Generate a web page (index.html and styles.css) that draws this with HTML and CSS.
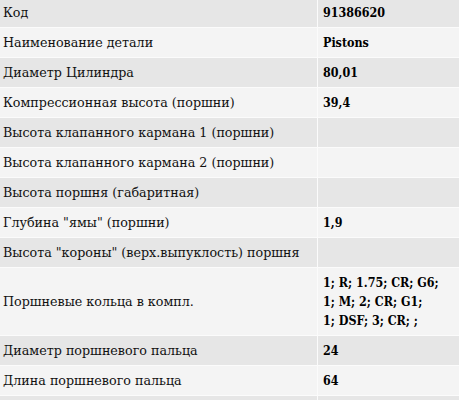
FILE: index.html
```html
<!DOCTYPE html>
<html lang="ru">
<head>
<meta charset="utf-8">
<title>Характеристики</title>
<link rel="stylesheet" href="styles.css">
</head>
<body>
<div class="wrap">
<table class="specs">
<tbody>
<tr class="odd"><td class="name">Код</td><td class="val">91386620</td></tr>
<tr class="even"><td class="name">Наименование детали</td><td class="val">Pistons</td></tr>
<tr class="odd"><td class="name">Диаметр Цилиндра</td><td class="val">80,01</td></tr>
<tr class="even"><td class="name">Компрессионная высота (поршни)</td><td class="val">39,4</td></tr>
<tr class="odd"><td class="name">Высота клапанного кармана 1 (поршни)</td><td class="val"></td></tr>
<tr class="even"><td class="name">Высота клапанного кармана 2 (поршни)</td><td class="val"></td></tr>
<tr class="odd"><td class="name">Высота поршня (габаритная)</td><td class="val"></td></tr>
<tr class="even"><td class="name">Глубина "ямы" (поршни)</td><td class="val">1,9</td></tr>
<tr class="odd"><td class="name">Высота "короны" (верх.выпуклость) поршня</td><td class="val"></td></tr>
<tr class="even"><td class="name">Поршневые кольца в компл.</td><td class="val">1; R; 1.75; CR; G6;<br>1; M; 2; CR; G1;<br>1; DSF; 3; CR; ;</td></tr>
<tr class="odd"><td class="name">Диаметр поршневого пальца</td><td class="val">24</td></tr>
<tr class="even"><td class="name">Длина поршневого пальца</td><td class="val">64</td></tr>
<tr class="odd"><td class="name">&nbsp;</td><td class="val">&nbsp;</td></tr>
</tbody>
</table>
</div>
</body>
</html>
```
FILE: styles.css
```css
html, body {
  margin: 0;
  padding: 0;
  background: #ffffff;
  overflow: hidden;
}
.wrap {
  margin: -3px 0 0 -3px;
}
.specs {
  width: 480px;
  border-collapse: separate;
  border-spacing: 1px;
  background: #fbfbfb;
  line-height: 19px;
  color: #000;
}
.specs td {
  padding: 5px;
  vertical-align: middle;
  white-space: nowrap;
}
.specs .name {
  width: 309px;
  font-family: "DejaVu Serif", serif;
  font-size: 12.7px;
  font-weight: normal;
  color: #111;
}
.specs .val {
  font-family: "DejaVu Serif Condensed", "DejaVu Serif", serif;
  font-stretch: condensed;
  font-size: 12.4px;
  font-weight: bold;
}
.odd td {
  background: #e6e6e6;
}
.even td {
  background: #f4f4f4;
}
```
